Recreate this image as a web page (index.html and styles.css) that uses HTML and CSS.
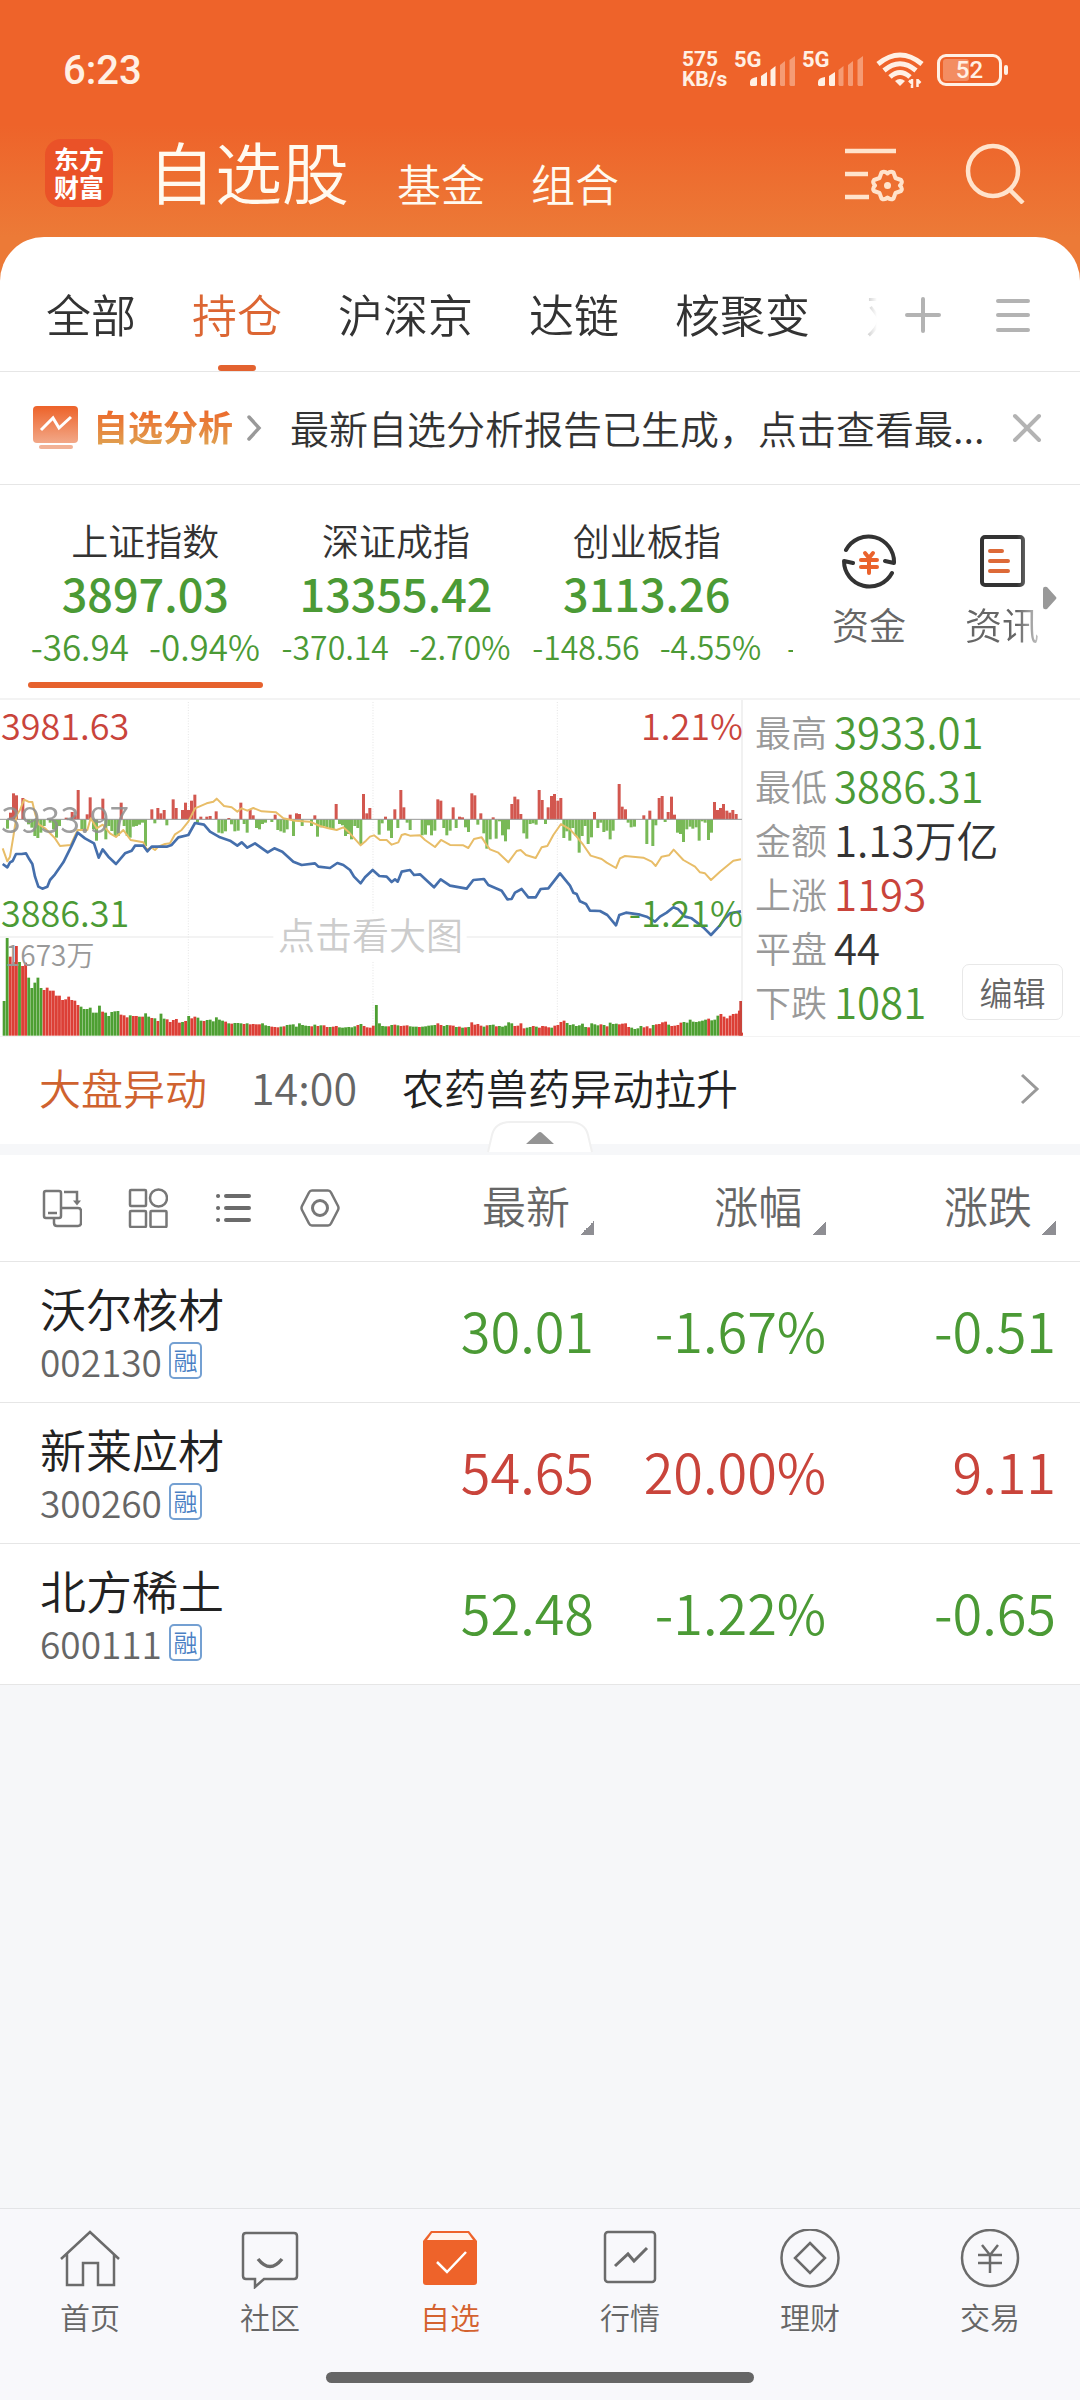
FILE: index.html
```html
<!DOCTYPE html>
<html lang="zh-CN">
<head>
<meta charset="utf-8">
<meta name="viewport" content="width=device-width, initial-scale=1">
<title>自选股</title>
<link rel="stylesheet" href="styles.css">
</head>
<body>
<header class="top">
  <div class="status">
    <span class="clock">6:23</span>
    <div class="status-icons">
      <span class="speed">575<br>KB/s</span>
      <span class="cell"><b>5G</b>
        <svg width="46" height="30" viewBox="0 0 46 30" fill="#fff0e4"><path d="M0 29v-3q0-4 7-5v8q0 1-2 1H1zM11 29V20l6-4v13q0 1-1 1h-4zM20.500 29V14l5-4v19q0 1-1 1h-3z"/><path opacity=".4" d="M30 29V9l5-4v24q0 1-1 1h-3zM39.500 29V4l5.500-4v29q0 1-1 1h-3.500z"/></svg>
      </span>
      <span class="cell"><b>5G</b>
        <svg width="46" height="30" viewBox="0 0 46 30" fill="#fff0e4"><path d="M0 29v-3q0-4 7-5v8q0 1-2 1H1zM11 29V20l6-4v13q0 1-1 1h-4z"/><path opacity=".4" d="M20.500 29V14l5-4v19q0 1-1 1h-3zM30 29V9l5-4v24q0 1-1 1h-3zM39.500 29V4l5.500-4v29q0 1-1 1h-3.500z"/></svg>
      </span>
      <svg class="wifi" width="48" height="36" viewBox="0 0 48 36" fill="none" stroke="#fff0e4" stroke-width="5"><path d="M2 12Q24-6 46 12M8 18.500Q24 5 40 18.500M14 25Q24 16 34 25"/><path d="M24 34l-5-5q5-4 10 0z" fill="#fff0e4" stroke="none"/><path stroke-width="2.500" d="M33 28.500l3 3V27v9M44.500 31l-3-3v-1 8"/></svg>
      <span class="battery"><span class="battery-level"></span><span class="battery-text">52</span></span>
    </div>
  </div>
  <div class="titlebar">
    <a class="logo" href="#">东方<br>财富</a>
    <h1>自选股</h1>
    <a class="sub" href="#">基金</a>
    <a class="sub" href="#">组合</a>
    <button class="icon-btn manage" aria-label="管理">
      <svg width="60" height="56" viewBox="0 0 60 56" fill="none" stroke="#ffe3cc" stroke-width="4.500"><path d="M0 5h51M0 28h23M0 51h24"/><path stroke-width="4" stroke-linejoin="round" d="M36.500 26.500Q39.500 24.500 42.500 27.500Q45.500 24.500 48.500 26.500L50.500 32L56 34Q58 36.500 55 39.500Q58 42.500 56 45L50.500 47L48.500 52.500Q45.500 54.500 42.500 51.500Q39.500 54.500 36.500 52.500L34.500 47L29 45Q27 42.500 30 39.500Q27 36.500 29 34L34.500 32Z"/><circle cx="42.500" cy="39.500" r="3.500" fill="#ffe3cc" stroke="none"/></svg>
    </button>
    <button class="icon-btn" aria-label="搜索">
      <svg width="60" height="62" viewBox="0 0 60 62" fill="none" stroke="#ffe3cc" stroke-width="4.500"><circle cx="28" cy="29" r="25"/><path d="M45 48l13 13"/></svg>
    </button>
  </div>
</header>

<main>
  <nav class="tabs">
    <div class="tab-list">
      <a href="#">全部</a><a class="active" href="#">持仓</a><a href="#">沪深京</a><a href="#">达链</a><a href="#">核聚变</a><a href="#">双</a>
    </div>
    <button class="icon-btn" aria-label="添加分组"><svg width="36" height="36" viewBox="0 0 36 36" stroke="#b3b3b3" stroke-width="4" stroke-linecap="round"><path d="M18 2v32M2 18h32"/></svg></button>
    <button class="icon-btn" aria-label="分组列表"><svg width="34" height="36" viewBox="0 0 34 36" stroke="#b3b3b3" stroke-width="4" stroke-linecap="round"><path d="M2 4h30M2 18h30M2 33h30"/></svg></button>
  </nav>

  <section class="notice">
    <svg width="46" height="44" viewBox="0 0 46 44"><defs><linearGradient id="ng" x1="0" y1="0" x2="0" y2="1"><stop offset="0" stop-color="#ed6229"/><stop offset="1" stop-color="#f2a888"/></linearGradient></defs><rect width="45" height="37" rx="4" fill="url(#ng)"/><rect x="6" y="39" width="34" height="4" rx="2" fill="#f2b296"/><path d="M8 24l12-12 6 10 12-11" fill="none" stroke="#fff" stroke-width="3"/></svg>
    <strong>自选分析</strong>
    <svg class="notice-arrow" width="16" height="28" viewBox="0 0 16 28" fill="none" stroke="#999" stroke-width="3.500" stroke-linecap="round"><path d="M3 3l10 11L3 25"/></svg>
    <a href="#">最新自选分析报告已生成，点击查看最...</a>
    <button class="icon-btn" aria-label="关闭"><svg width="30" height="30" viewBox="0 0 30 30" stroke="#b3b3b3" stroke-width="4" stroke-linecap="round"><path d="M3 3l24 24M27 3L3 27"/></svg></button>
  </section>

  <section class="indices">
    <div class="index-list">
      <button class="index current"><span>上证指数</span><b>3897.03</b><small><i>-36.94</i><i>-0.94%</i></small></button>
      <button class="index"><span>深证成指</span><b>13355.42</b><small><i>-370.14</i><i>-2.70%</i></small></button>
      <button class="index"><span>创业板指</span><b>3113.26</b><small><i>-148.56</i><i>-4.55%</i></small></button>
      <span class="index-peek">-</span>
    </div>
    <div class="quick">
      <a href="#"><svg width="56" height="56" viewBox="0 0 56 56" fill="none" stroke="#333" stroke-width="4" stroke-linecap="round" stroke-linejoin="round"><path d="M5 17A25.500 25.500 0 0 1 53 30l-9-2M51 40A25.500 25.500 0 0 1 3 28l9 2"/><path stroke="#ea622c" d="M24 20l4 5 4-5M20 27h16M20 34h16M28 26v14"/></svg>资金</a>
      <a href="#" class="fade"><svg width="56" height="56" viewBox="0 0 56 56" fill="none" stroke="#333" stroke-width="4" stroke-linecap="round"><rect x="8" y="4" width="41" height="48" rx="3"/><path stroke="#dd6a38" d="M16 18h12M16 28h18M16 38h18"/></svg>资讯</a>
      <svg class="more" width="14" height="24" viewBox="0 0 14 24" fill="#999"><path d="M0 3Q0 0 4 1l9 10q1 1 0 2L4 23q-4 1-4-2z"/></svg>
    </div>
  </section>

  <section class="market">
    <div class="chart">
      <svg viewBox="0 30 2229 1007" aria-hidden="true">
        <g fill="none" stroke="#efefef" stroke-width="5"><path d="M0 741H820M1400 741H2226M2226 30V1038"/></g>
        <g fill="none" stroke="#e4e4e4" stroke-width="3" stroke-dasharray="3 5"><path d="M565 36V1036M1119 36V670M1119 816V1036M1672 36V1036"/></g>
        <g id="flow"></g>
        <path d="M0 388H2226" stroke="#999" stroke-width="3"/>
        <g id="volume"></g>
        <path class="avg" d="M8 475L22 514 30 500 40 440 50 375 60 360 72 329 85 335 97 336 105 370 115 402 135 415 165 445 180 468 212 465 233 420 262 420 272 385 290 415 308 404 330 430 348 441 370 420 392 450 430 457 440 478 455 473 465 480 475 470 495 462 510 460 525 433 545 420 565 395 585 355 620 340 640 335 650 326 672 348 695 352 712 365 725 355 742 362 760 354 785 364 828 367 850 385 885 392 930 395 960 408 985 415 1010 420 1030 412 1045 425 1082 466 1098 452 1110 440 1122 436 1140 450 1160 450 1175 464 1195 457 1205 435 1215 432 1230 437 1260 436 1275 450 1305 471 1323 450 1350 465 1390 466 1405 474 1422 447 1445 442 1460 465 1470 478 1495 488 1525 517 1550 483 1562 480 1578 495 1607 504 1625 472 1642 468 1660 435 1683 402 1710 418 1730 440 1750 465 1772 497 1805 507 1820 518 1848 534 1860 505 1875 498 1930 503 1955 515 1967 528 1985 500 2007 496 2021 479 2050 510 2085 530 2100 547 2115 550 2133 570 2160 545 2200 512 2223 508"/>
        <path class="price" d="M8 522L22 532 30 517 38 513 48 492 65 492 78 490 88 508 97 522 105 560 115 590 127 596 142 590 150 570 165 553 190 517 215 467 233 428 255 445 282 460 296 503 308 478 325 500 348 522 375 490 395 482 405 467 430 467 442 484 455 470 500 470 515 465 535 442 565 435 585 399 612 404 630 425 660 442 690 452 712 467 725 457 742 473 765 460 803 487 823 475 847 485 880 515 905 525 945 520 955 530 990 534 1012 519 1030 525 1050 540 1062 560 1082 580 1095 562 1118 540 1138 558 1160 560 1175 576 1185 568 1193 575 1205 545 1230 540 1242 555 1260 553 1302 592 1322 568 1350 587 1400 596 1420 570 1452 567 1465 585 1505 602 1522 628 1535 627 1545 608 1565 597 1585 622 1607 622 1622 597 1645 595 1680 550 1710 587 1720 608 1730 612 1740 634 1758 642 1770 662 1800 663 1822 675 1848 706 1858 675 1878 668 1920 674 1940 680 1965 695 1980 680 2000 668 2020 652 2035 658 2055 680 2075 685 2110 712 2133 735 2160 706 2175 685 2190 670 2223 664"/>
      </svg>
      <span class="lab up high">3981.63</span>
      <span class="lab mid">3933.97</span>
      <span class="lab down low">3886.31</span>
      <span class="lab up high right">1.21%</span>
      <span class="lab down low right">-1.21%</span>
      <span class="lab vol">1673万</span>
      <a class="hint" href="#">点击看大图</a>
    </div>
    <div class="stats">
      <dl>
        <dt>最高</dt><dd class="down">3933.01</dd>
        <dt>最低</dt><dd class="down">3886.31</dd>
        <dt>金额</dt><dd>1.13万亿</dd>
        <dt>上涨</dt><dd class="up">1193</dd>
        <dt>平盘</dt><dd>44</dd>
        <dt>下跌</dt><dd class="down">1081</dd>
      </dl>
      <button class="edit">编辑</button>
    </div>
  </section>

  <section class="alert">
    <strong>大盘异动</strong><time>14:00</time><a href="#">农药兽药异动拉升</a>
    <svg class="alert-arrow" width="20" height="32" viewBox="0 0 20 32" fill="none" stroke="#999" stroke-width="3"><path d="M2 2l15 14L2 30"/></svg>
    <button class="collapse" aria-label="收起"><svg width="106" height="32" viewBox="0 0 106 32"><path d="M1 31l4-17Q8 1 24 1h58q16 0 19 13l4 17z" fill="#fff"/><path d="M1 31l4-17Q8 1 24 1h58q16 0 19 13l4 17" fill="none" stroke="#f0f0f0" stroke-width="2"/><path d="M39 23l12-11q2-2 4 0l12 11z" fill="#949494"/></svg></button>
  </section>

  <table class="stocks">
    <colgroup><col class="c-name"><col class="c-last"><col class="c-pct"><col class="c-chg"></colgroup>
    <thead>
      <tr>
        <th><div class="tools">
          <button class="icon-btn" aria-label="横屏"><svg width="40" height="40" viewBox="0 0 40 40" fill="none" stroke="#777" stroke-width="2.500"><rect x="2" y="3" width="17" height="27" rx="2"/><path d="M6 25h9M22 4h13v11M19 20h17q3 0 3 3v12q0 3-3 3H15q-3 0-3-3v-5"/><path d="M31 12.500h8l-4 5z" fill="#777" stroke="none"/></svg></button>
          <button class="icon-btn" aria-label="宫格"><svg width="40" height="40" viewBox="0 0 40 40" fill="none" stroke="#777" stroke-width="2.500"><rect x="2" y="2" width="16" height="16" rx="1"/><circle cx="30.500" cy="10" r="8.500"/><rect x="2" y="23" width="16" height="16" rx="1"/><rect x="22.500" y="23" width="16" height="16" rx="1"/></svg></button>
          <button class="icon-btn" aria-label="列表"><svg width="40" height="40" viewBox="0 0 40 40" fill="none" stroke="#6b6b6b" stroke-width="4" stroke-linecap="round"><path d="M12 8h23M12 20h23M12 32h23M4 8h.1M4 20h.1M4 32h.1"/></svg></button>
          <button class="icon-btn" aria-label="设置"><svg width="40" height="40" viewBox="0 0 40 40" fill="none" stroke="#777" stroke-width="2.500"><path d="M12 2.500h16q2 0 3 2l7 13.500q1 2 0 4l-7 13.500q-1 2-3 2H12q-2 0-3-2L2 22q-1-2 0-4L9 4.500q1-2 3-2z"/><circle cx="20" cy="20" r="7.500" stroke-width="3"/></svg></button>
        </div></th>
        <th><button class="sort">最新</button></th>
        <th><button class="sort">涨幅</button></th>
        <th><button class="sort">涨跌</button></th>
      </tr>
    </thead>
    <tbody>
      <tr><td><a href="#">沃尔核材</a><span class="code">002130<em>融</em></span></td><td class="down">30.01</td><td class="down">-1.67%</td><td class="down">-0.51</td></tr>
      <tr><td><a href="#">新莱应材</a><span class="code">300260<em>融</em></span></td><td class="up">54.65</td><td class="up">20.00%</td><td class="up">9.11</td></tr>
      <tr><td><a href="#">北方稀土</a><span class="code">600111<em>融</em></span></td><td class="down">52.48</td><td class="down">-1.22%</td><td class="down">-0.65</td></tr>
    </tbody>
  </table>
</main>

<footer class="bottom">
  <nav>
    <a href="#"><svg viewBox="0 0 60 60"><path d="M1 30L30 3l29 27M7 25v31h16V34h15v22h16V25"/></svg>首页</a>
    <a href="#"><svg viewBox="0 0 60 60"><path d="M6 4h48q3 0 3 3v40q0 3-3 3H24l-9 8v-8H6q-3 0-3-3V7q0-3 3-3z"/><path stroke-width="3.500" d="M18 30q12 15 24 0"/></svg>社区</a>
    <a href="#" class="active"><svg viewBox="0 0 60 60"><path d="M3 12l8-10h38l8 10v41q0 3-3 3H6q-3 0-3-3z" fill="#ee632a" stroke="none"/><path d="M12 4h36l5 7H7z" fill="#fff4ec" stroke="none"/><path stroke="#fff" d="M17 33l10 10 19-20"/></svg>自选</a>
    <a href="#"><svg viewBox="0 0 60 60"><rect x="5" y="3" width="50" height="50" rx="3"/><path stroke-width="3" d="M15 37l13-12 6 7 13-13"/></svg>行情</a>
    <a href="#"><svg viewBox="0 0 60 60"><circle cx="30" cy="29" r="28.500"/><path d="M30 14l15 15-15 15-15-15z"/></svg>理财</a>
    <a href="#"><svg viewBox="0 0 60 60"><circle cx="30" cy="29" r="28"/><path d="M22 16l8 10 8-10M18 26h24M18 34h24M30 26v18"/></svg>交易</a>
  </nav>
  <div class="home-bar"></div>
</footer>
<script src="chart.js"></script>
</body>
</html>
```

FILE: styles.css
```css
:root {
  --orange: #ee632a;
  --up: #c9443b;
  --down: #4b9a35;
  --text: #333;
  --sub: #666;
  --muted: #999;
  --line: #e6e6e6;
}

* { box-sizing: border-box; }

body {
  margin: 0;
  min-height: 100vh;
  display: flex;
  flex-direction: column;
  background: #f6f7f9;
  color: var(--text);
  font-family: "Noto Sans CJK SC", sans-serif;
  font-weight: 350;
}

a { color: inherit; text-decoration: none; }
button { border: 0; background: none; padding: 0; margin: 0; font: inherit; color: inherit; }
svg { display: block; flex: none; }
.icon-btn { display: block; flex: none; }
.up { color: var(--up); }
.down { color: var(--down); }

/* status and title */
.top {
  height: 282px;
  background: linear-gradient(#ee632a 125px, #ec7a37 237px);
}
.status {
  height: 139px;
  padding: 0 78px 0 63px;
  display: flex;
  justify-content: space-between;
  color: #fff0e4;
}
.clock { font: 500 40px/141px Roboto, sans-serif; }
.status-icons { display: flex; align-items: flex-start; padding-top: 49px; gap: 8px; }
.speed { width: 44px; font: 700 21px/20px Roboto, sans-serif; }
.cell { position: relative; width: 60px; height: 36px; }
.cell b { position: absolute; left: 0; top: 0; font: 700 22px/22px Roboto, sans-serif; }
.cell svg { margin: 7px 0 0 16px; }
.wifi { margin: 3px 5px 0 6px; }
.battery {
  position: relative;
  width: 65px;
  height: 32px;
  margin-top: 5px;
  border: 3px solid #fff0e4;
  border-radius: 9px;
}
.battery::after {
  content: "";
  position: absolute;
  right: -9px;
  top: 8px;
  width: 4px;
  height: 10px;
  border-radius: 2px;
  background: #fff0e4;
}
.battery-level { position: absolute; inset: 2px auto 2px 3px; width: 26px; border-radius: 3px; background: rgb(255 240 228 / .3); }
.battery-text { position: absolute; inset: 0; text-align: center; font: 500 24px/27px Roboto, sans-serif; }
.titlebar { display: flex; align-items: flex-start; padding: 0 55px 0 45px; }
.logo {
  width: 68px;
  height: 68px;
  padding: 5px 0;
  border-radius: 16px;
  background: #ea5228;
  color: #fff;
  font-size: 25px;
  font-weight: 700;
  line-height: 28px;
  text-align: center;
}
.titlebar h1 { margin: 0 2px 0 35px; font-size: 67px; font-weight: 350; line-height: 62px; color: #fffaf0; }
.sub { margin-left: 46px; font-size: 44px; line-height: 88px; color: #fffaf0; }
.manage { margin-left: auto; margin-right: 60px; padding-top: 7px; }
.titlebar .icon-btn:last-child { padding-top: 3px; }

/* group tabs */
main { background: #fff; border-radius: 44px 44px 0 0; margin-top: -45px; }
.tabs { height: 135px; display: flex; align-items: center; padding: 0 50px 0 46px; border-bottom: 1px solid var(--line); }
.tabs button { margin-top: 21px; }
.tabs button + button { margin-left: 55px; }
.tab-list {
  flex: 1;
  min-width: 0;
  height: 100%;
  margin-right: 28px;
  display: flex;
  gap: 56px;
  overflow: hidden;
  white-space: nowrap;
  font-size: 45px;
  line-height: 154px;
  mask-image: linear-gradient(to left, transparent, #000 40px);
}
.tab-list .active { position: relative; color: #dc6633; }
.tab-list .active::after {
  content: "";
  position: absolute;
  left: 50%;
  bottom: 0;
  width: 38px;
  height: 6px;
  margin-left: -19px;
  border-radius: 3px;
  background: #e3622f;
}

/* report notice */
.notice { height: 113px; display: flex; align-items: center; padding: 0 38px 0 33px; border-bottom: 1px solid var(--line); }
.notice strong {
  margin-left: 14px;
  font-size: 35px;
  font-weight: 700;
  line-height: 50px;
  padding-bottom: 4px;
  background: linear-gradient(#ec6a2c 10px, #e0a050 44px);
  background-clip: text;
  color: transparent;
}
.notice-arrow { margin: 0 28px 0 13px; }
.notice a { flex: 1; min-width: 0; padding-bottom: 3px; overflow: hidden; font-size: 39px; white-space: nowrap; }

/* indices */
.indices { height: 215px; display: flex; border-bottom: 2px solid #f3f3f3; }
.index-list { flex: 1; display: flex; padding-left: 20px; overflow: hidden; }
.index {
  position: relative;
  flex: 1;
  display: flex;
  flex-direction: column;
  align-items: center;
  padding-top: 33px;
}
.index span { font-size: 37px; line-height: 44px; }
.index b { font-size: 45px; font-weight: 500; line-height: 62px; color: var(--down); }
.index small { display: flex; gap: 20px; font-size: 32px; line-height: 44px; color: var(--down); }
.index i { font-style: normal; }
.index.current small { font-size: 35px; }
.index.current::after {
  content: "";
  position: absolute;
  inset: auto 8px 10px;
  height: 6px;
  border-radius: 3px;
  background: #e6622e;
}
.index-peek { width: 21px; padding: 140px 0 0 15px; overflow: hidden; font-size: 32px; line-height: 42px; color: var(--down); }
.quick { position: relative; width: 287px; display: flex; padding: 48px 0 0 21px; }
.quick a { width: 110px; display: flex; flex-direction: column; align-items: center; font-size: 37px; line-height: 70px; color: var(--sub); }
.quick a + a { margin-left: 23px; }
.fade { mask-image: linear-gradient(to left, rgb(0 0 0 / .1) 8px, #000 40px); }
.more { position: absolute; right: 23px; top: 101px; }

/* market overview */
.market { display: grid; grid-template-columns: 743fr 337fr; border-bottom: 1px solid #f3f3f3; }
.chart { position: relative; }
.chart > svg { width: 100%; height: auto; }
.avg { fill: none; stroke: #e8bd68; stroke-width: 6; stroke-linejoin: round; }
.price { fill: none; stroke: #456fac; stroke-width: 8; stroke-linejoin: round; }
.lab { position: absolute; left: 1px; font-size: 36px; line-height: 36px; }
.high { top: 6px; }
.low { top: 193px; }
.right { left: auto; right: 0; }
.mid { top: 99px; color: #8e8e8e; opacity: .85; }
.vol { left: 5px; top: 239px; font-size: 28px; line-height: 30px; color: var(--muted); }
.hint { position: absolute; left: 278px; top: 214px; font-size: 37px; line-height: 40px; color: #ccc; }
.stats { position: relative; padding: 4px 0 0 12px; }
.stats dl { margin: 0; display: grid; grid-template-columns: 79px 1fr; line-height: 54px; }
.stats dt { font-size: 36px; color: var(--muted); }
.stats dd { margin: 0; font-size: 42px; }
.edit {
  position: absolute;
  right: 17px;
  bottom: 16px;
  width: 101px;
  height: 56px;
  border: 1px solid #e8e8e8;
  border-radius: 7px;
  background: #fff;
  font-size: 33px;
  line-height: 48px;
  color: var(--sub);
}

/* market alert */
.alert {
  position: relative;
  height: 118px;
  display: flex;
  align-items: center;
  padding: 0 40px 8px 39px;
  border-bottom: 11px solid #f6f7f9;
  font-size: 42px;
}
.alert strong { font-weight: 350; color: #cf622f; }
.alert time { margin: 0 45px 0 44px; font-size: 43px; color: var(--sub); }
.alert a { flex: 1; color: #222; }
.alert-arrow { margin-top: 6px; }
.collapse { position: absolute; left: 50%; bottom: -9px; margin-left: -53px; }

/* stock table */
.stocks { width: 100%; border-collapse: collapse; table-layout: fixed; }
.c-name { width: 34%; }
.c-last { width: 21%; }
.c-pct { width: 21.5%; }
.stocks tr { border-bottom: 1px solid var(--line); }
.stocks th { height: 107px; padding: 0 0 5px; font-weight: 350; text-align: right; }
.tools { display: flex; gap: 46px; padding: 5px 0 0 42px; }
.sort { position: relative; padding-right: 24px; font-size: 44px; line-height: 60px; color: var(--sub); }
.sort::after {
  content: "";
  position: absolute;
  right: 0;
  bottom: 0;
  width: 14px;
  height: 14px;
  background: linear-gradient(to bottom right, transparent 50%, #8e8e93 50%);
}
.stocks td { height: 141px; padding: 0 0 5px; font-size: 54px; line-height: 70px; text-align: right; }
.stocks td:first-child { padding: 0 0 1px 40px; text-align: left; }
.stocks td:last-child, .stocks th:last-child { padding-right: 24px; }
.stocks td a { display: block; font-size: 46px; line-height: 58px; color: #222; }
.code { display: flex; align-items: center; gap: 7px; font-size: 37px; line-height: 50px; color: var(--sub); }
.code em {
  width: 33px;
  height: 37px;
  border: 2px solid #74a0d2;
  border-radius: 5px;
  font-size: 24px;
  font-style: normal;
  line-height: 32px;
  text-align: center;
  color: #4a80c4;
}

/* bottom navigation */
.bottom { margin-top: auto; height: 192px; border-top: 1px solid #e3e4e6; background: #f8f8fb; }
.bottom nav { display: flex; }
.bottom nav a { flex: 1; display: flex; flex-direction: column; align-items: center; padding-top: 20px; font-size: 30px; line-height: 54px; color: var(--sub); }
.bottom nav svg { width: 60px; height: 60px; fill: none; stroke: #6b6b6b; stroke-width: 2.5; }
.bottom nav .active { color: #d4622f; }
.home-bar { width: 428px; max-width: 40%; height: 11px; margin: 29px auto 0; border-radius: 6px; background: #666; }
```

FILE: chart.js
```js
const GREEN = "#4d9f32", RED = "#dc3f36";
const STEP = 9.23;

function rect(x, y, h, w, fill) {
  return `<rect x="${x}" y="${y}" width="${w}" height="${h}" fill="${fill}"/>`;
}

// Traded volume per minute; the sign gives the direction of the price.
const volume = [
  104, 293, -237, -221, -269, 221, -209, -219, 174, 143, 159, 174, 143, -137, -144, -135, -135, -120, -120, -107,
  -109, -117, -107, -105, -92, 87, 80, 80, 84, 69, 69, 90, -72, 69, 59, 71, 73, 74, -63, -61,
  -55, 61, -59, -59, 57, -57, 67, 57, -53, 52, -44, 66, 51, -49, -41, -47, -50, -39, 41, -44,
  59, -52, -57, 54, 45, -44, 47, 48, 43, 55, 48, 45, -42, 37, -36, 38, 38, 37, -35, 37,
  -34, -35, -34, -34, 37, 31, 29, -27, -26, -25, 27, -28, 32, 33, 34, 27, 37, 32, 30, 29,
  -28, 33, -29, 31, -31, -26, 26, -27, -29, 25, 24, 25, 26, 25, 28, -32, 35, -29, -25, -24,
  -30, 92, 37, 29, 28, -28, 32, -33, 31, -29, -30, -31, 28, 27, 27, -26, 27, 28, 30, 31,
  32, -37, -32, 29, 32, -31, -30, 26, -27, 24, -25, 26, -40, -33, -35, -30, 27, -31, 32, 33,
  -28, 29, 27, 30, 40, 37, -29, -30, -37, -22, 24, 26, -29, 27, -24, -29, -28, -25, 24, -30,
  -32, -41, -45, 38, 32, 34, 29, 31, 36, 26, -25, 37, 34, 31, -34, 32, -28, 39, 35, 36,
  -34, -36, -37, -26, 24, 20, 22, 29, -25, -28, -22, 32, -34, -35, -40, -42, 33, -29, -30, -32,
  -39, 41, 39, 48, 42, 41, 43, 45, 48, -51, 46, 48, 60, -65, -57, -52, -60, -65, -66, -75, -9
];

// Net inflow (up) and outflow (down) around the previous close.
const inflow = [31,20, 40,78, 49,72, 68,64, 198,5, 216,22, 225,12, 234,88, 261,15, 270,66, 308,62, 363,50, 455,30, 473,34, 482,18, 492,28, 519,60, 528,34, 547,28, 556,50, 565,28, 574,56, 584,74, 602,8, 620,8, 630,10, 648,24, 686,4, 722,50, 750,28, 759,12, 825,14, 870,14, 889,18, 898,16, 944,12, 1008,46, 1090,76, 1100,18, 1109,34, 1156,8, 1184,30, 1202,88, 1211,36, 1313,60, 1322,56, 1359,36, 1378,8, 1387,6, 1415,78, 1424,72, 1442,18, 1479,6, 1535,46, 1544,68, 1553,60, 1562,16, 1617,88, 1626,58, 1644,36, 1654,70, 1663,76, 1673,56, 1682,64, 1783,22, 1857,106, 1866,38, 1876,30, 1931,12, 1949,26, 1977,64, 1986,70, 2004,22, 2014,68, 2023,14, 2143,52, 2152,28, 2161,34, 2170,46, 2180,26, 2189,20, 2198,28, 2208,16];
const outflow = [22,28, 85,15, 95,25, 104,50, 113,56, 122,40, 132,20, 150,10, 160,30, 169,55, 178,20, 245,30, 254,35, 280,30, 289,64, 317,60, 326,20, 335,35, 345,50, 354,50, 372,20, 381,50, 390,55, 400,22, 409,20, 418,16, 427,10, 436,80, 464,12, 500,18, 592,10, 656,40, 666,42, 676,36, 694,15, 704,36, 714,34, 732,14, 741,40, 769,26, 778,30, 787,14, 796,10, 815,8, 833,32, 842,36, 852,40, 861,30, 880,50, 906,20, 934,20, 952,52, 962,24, 971,20, 980,24, 990,26, 999,32, 1018,14, 1027,18, 1036,50, 1045,44, 1054,60, 1064,20, 1073,26, 1082,75, 1137,46, 1146,12, 1165,34, 1174,56, 1193,26, 1221,10, 1230,32, 1266,48, 1276,46, 1285,18, 1294,48, 1304,34, 1331,26, 1340,48, 1350,34, 1368,26, 1396,24, 1405,38, 1433,16, 1451,42, 1460,88, 1470,60, 1488,58, 1498,6, 1507,48, 1516,66, 1525,30, 1571,42, 1580,58, 1590,14, 1599,12, 1608,16, 1636,14, 1691,56, 1700,36, 1709,64, 1718,26, 1728,50, 1737,100, 1746,50, 1755,20, 1764,74, 1774,54, 1793,26, 1802,10, 1811,38, 1820,34, 1830,60, 1839,34, 1884,10, 1893,24, 1903,22, 1940,74, 1958,80, 1967,18, 1995,8, 2032,40, 2041,44, 2050,68, 2060,30, 2070,22, 2078,28, 2088,24, 2097,64, 2106,6, 2115,10, 2125,62, 2134,40];

let flow = "";
for (let i = 0; i < inflow.length; i += 2) {
  flow += rect(inflow[i] - 4, 388 - inflow[i + 1], inflow[i + 1], 9, "#d2574f");
}
for (let i = 0; i < outflow.length; i += 2) {
  flow += rect(outflow[i] - 4, 388, outflow[i + 1], 9, "#79b957");
}
document.getElementById("flow").innerHTML = flow;

document.getElementById("volume").innerHTML = volume
  .map((v, i) => rect((8 + i * STEP).toFixed(1), 1037 - Math.abs(v), Math.abs(v), 8.5, v > 0 ? GREEN : RED))
  .join("") + rect(2218, 933, 104, 8, "#c9443b");
```
